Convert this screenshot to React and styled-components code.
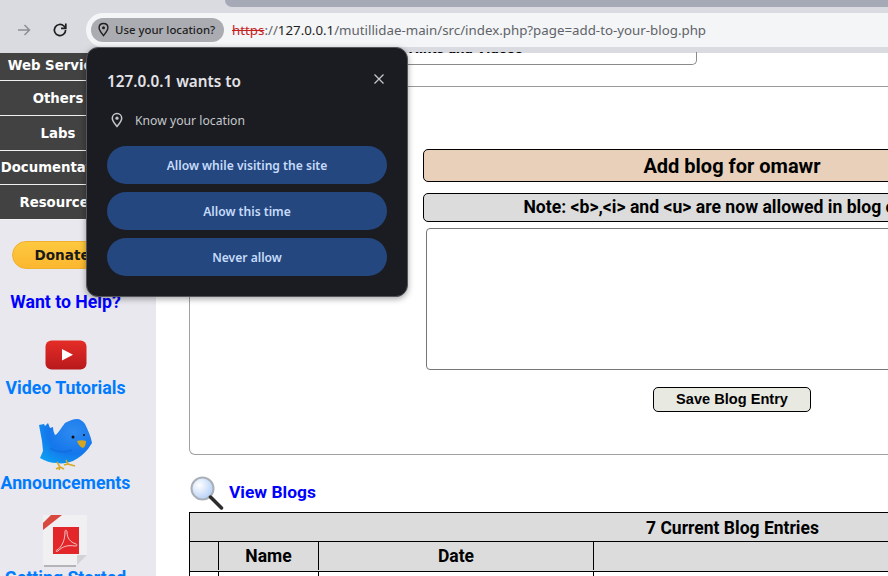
import React from 'react';
import styled, { createGlobalStyle } from 'styled-components';

const GlobalStyle = createGlobalStyle`
html, body {
  margin: 0;
  padding: 0;
  background: #fff;
}
* {
  box-sizing: border-box;
}
`;

const Screen = styled.div`
position: relative;
width: 888px;
height: 576px;
overflow: hidden;
display: flex;
flex-direction: column;
font-family: Roboto, "Liberation Sans", sans-serif;
`;

const TabStrip = styled.div`
height: 13px;
background: #d9dbe1;
padding-left: 225px;
flex: none;
`;

const ActiveTabEdge = styled.div`
height: 7px;
background: #a6aab6;
border-bottom-left-radius: 8px;
`;

const Toolbar = styled.div`
height: 40px;
flex: none;
background: #d9dbe1;
padding-bottom: 6px;
display: flex;
align-items: stretch;
`;

const NavButtons = styled.div`
width: 86px;
flex: none;
display: flex;
align-items: center;
padding-left: 16px;
gap: 20px;
`;

const Omnibox = styled.div`
flex: 1;
background: #f4f5f7;
border-radius: 17px 0 0 17px;
display: flex;
align-items: center;
padding-left: 5px;
`;

const LocationChip = styled.div`
height: 24px;
width: 133px;
flex: none;
border-radius: 12px;
background: #abacb1;
color: #1f1f1f;
display: flex;
align-items: center;
gap: 4px;
padding: 0 0 1px 5px;
font: 500 11.4px "Noto Sans", sans-serif;
white-space: nowrap;
`;

const Url = styled.div`
margin-left: 8px;
font: 13.3px "Noto Sans", sans-serif;
color: #5f6368;
white-space: nowrap;
`;

const Scheme = styled.span`
color: #c5221f;
text-decoration: line-through;
`;

const Host = styled.span`
color: #1f1f1f;
`;

const Page = styled.div`
flex: 1;
min-height: 0;
display: flex;
`;

const Sidebar = styled.div`
width: 156px;
flex: none;
background: #e8e8ee;
display: flex;
flex-direction: column;
`;

const Menu = styled.div`
width: 116px;
display: flex;
flex-direction: column;
`;

const MenuItem = styled.div`
height: ${p => p.$h || 35}px;
background: #424242;
border-bottom: 1px solid #f0f0f0;
color: #fff;
display: flex;
align-items: center;
justify-content: center;
white-space: nowrap;
font: bold 13.3px "DejaVu Sans", sans-serif;
padding-bottom: ${p => p.$lift || 0}px;
`;

const SideLinks = styled.div`
width: 131px;
display: flex;
flex-direction: column;
align-items: center;
padding-top: 21px;
`;

const DonateButton = styled.div`
width: 108px;
height: 28px;
flex: none;
border-radius: 14px;
background: linear-gradient(#fdc93f, #fbb72f);
border: 1px solid #f0b030;
color: #1a1a1a;
font: bold 13.6px "DejaVu Sans", sans-serif;
padding-left: 22px;
display: flex;
align-items: center;
white-space: nowrap;
`;

const SideLink = styled.div`
font: bold 17.7px Roboto, sans-serif;
line-height: 21px;
white-space: nowrap;
color: ${p => p.$dark ? '#0000ff' : '#007bff'};
margin-top: ${p => p.$top || 0}px;
`;

const SideIcon = styled.div`
display: flex;
flex: none;
margin-top: ${p => p.$top || 0}px;
`;

const Content = styled.div`
flex: 1;
min-width: 0;
position: relative;
`;

const TopPanel = styled.div`
height: 34px;
border-bottom: 1px solid #999;
`;

const HintsBox = styled.div`
width: 541px;
height: 13px;
border: 1px solid #8a8a8a;
border-top: 0;
border-radius: 0 0 5px 0;
display: flex;
justify-content: flex-end;
align-items: flex-start;
overflow: hidden;
padding-right: 173px;
font: bold 15px Roboto, sans-serif;
line-height: 14px;
position: relative;
top: -1px;
`;

const HintsText = styled.span`
display: block;
margin-top: -11px;
white-space: nowrap;
`;

const FormPanel = styled.div`
width: 1100px;
margin-left: 33px;
height: 368px;
margin-top: 0;
border: 1px solid #a0a0a0;
border-top: 0;
border-radius: 0 0 0 6px;
padding: 62px 0 0 233px;
`;

const FormColumn = styled.div`
width: 618px;
display: flex;
flex-direction: column;
align-items: center;
`;

const FormTitle = styled.div`
width: 100%;
height: 33px;
background: #e8d0bb;
border: 1px solid #000;
border-radius: 5px;
display: flex;
align-items: center;
justify-content: center;
font: bold 20px Roboto, sans-serif;
color: #000;
`;

const FormNote = styled.div`
width: 100%;
height: 29px;
margin-top: 11px;
padding-bottom: 1px;
background: #dcdcdc;
border: 1px solid #000;
border-radius: 5px;
display: flex;
align-items: center;
justify-content: center;
font: bold 17.6px Roboto, sans-serif;
color: #000;
white-space: nowrap;
`;

const BlogInput = styled.div`
width: 612px;
height: 142px;
margin-top: 6px;
border: 1px solid #767676;
border-radius: 4px;
background: #fff;
`;

const SaveButton = styled.div`
width: 158px;
height: 25px;
margin-top: 17px;
padding-bottom: 1px;
background: #e8e9e1;
border: 1px solid #000;
border-radius: 5px;
display: flex;
align-items: center;
justify-content: center;
font: bold 14.6px "Liberation Sans", sans-serif;
color: #000;
`;

const BlogsHeading = styled.div`
margin: 21px 0 0 33px;
height: 36px;
display: flex;
align-items: center;
gap: 5px;
font: bold 17.4px Roboto, sans-serif;
color: #0000ff;
`;

const BlogsLabel = styled.span`
padding-bottom: 4px;
`;

const BlogTable = styled.div`
margin-left: 33px;
width: 1086px;
border-top: 1px solid #000;
border-left: 1px solid #000;
background: #dcdcdc;
color: #000;
font: bold 17.5px Roboto, sans-serif;
`;

const TableTitle = styled.div`
height: 29px;
padding-top: 1px;
border-bottom: 1px solid #000;
display: flex;
align-items: center;
justify-content: center;
`;

const ColumnRow = styled.div`
display: grid;
grid-template-columns: 29px 100px 275px 1fr;
height: 30px;
padding-bottom: 1px;
border-bottom: 1px solid #000;
`;

const ColumnHead = styled.div`
border-right: 1px solid #000;
display: flex;
align-items: center;
justify-content: center;
`;

const BodyRow = styled.div`
display: grid;
grid-template-columns: 29px 100px 275px 1fr;
height: 20px;
background: #fff;
`;

const Popover = styled.div`
position: absolute;
left: 86px;
top: 47px;
width: 322px;
height: 250px;
background: #1b1c21;
border: 1px solid #55565c;
border-radius: 12px;
box-shadow: 0 2px 6px rgba(0, 0, 0, 0.35);
padding: 0 20px;
display: flex;
flex-direction: column;
font-family: "Noto Sans", sans-serif;
`;

const PopoverHeader = styled.div`
height: 65px;
display: flex;
align-items: center;
justify-content: space-between;
padding: 0 1px 0 0;
color: #e3e3e8;
font-size: 15.3px;
font-weight: 600;
`;

const CloseButton = styled.div`
width: 14px;
height: 14px;
display: flex;
margin-top: -3px;
`;

const PermissionRow = styled.div`
height: 16px;
display: flex;
align-items: center;
gap: 10px;
padding-left: 2px;
margin-top: -1px;
color: #c4c7cc;
font-size: 12.2px;
`;

const Choices = styled.div`
display: flex;
flex-direction: column;
gap: 8px;
margin-top: 18px;
`;

const Choice = styled.div`
height: 38px;
border-radius: 19px;
background: #24477f;
color: #c6dbfa;
display: flex;
align-items: center;
justify-content: center;
font-size: 12.1px;
font-weight: 600;
`;

const PinIcon = ({ color = '#1f1f1f', size = 15 }) => (
  <svg width={size} height={size} viewBox="0 0 16 16" fill="none">
    <path d="M8 1.6c-2.8 0-4.7 2-4.7 4.6 0 3 3 6 4.7 8.2 1.7-2.2 4.7-5.2 4.7-8.2 0-2.6-1.9-4.6-4.7-4.6z" stroke={color} strokeWidth="1.5" />
    <circle cx="8" cy="6.2" r="1.6" fill={color} />
  </svg>
);

const ForwardIcon = () => (
  <svg width="16" height="16" viewBox="0 0 16 16" fill="none" stroke="#8d8f94" strokeWidth="1.5">
    <path d="M2 8h11.5M8.5 3l5 5-5 5" />
  </svg>
);

const ReloadIcon = () => (
  <svg width="16" height="16" viewBox="0 0 16 16" fill="none" stroke="#1f1f1f" strokeWidth="1.7">
    <path d="M13.6 8a5.6 5.6 0 1 1-1.7-4L13.6 6" />
    <path d="M13.8 1.6v4.8H9" />
  </svg>
);

const CloseIcon = () => (
  <svg width="14" height="14" viewBox="0 0 14 14" stroke="#c4c7cc" strokeWidth="1.3">
    <path d="M2.5 2.5l9 9M11.5 2.5l-9 9" />
  </svg>
);

const YoutubeIcon = () => (
  <svg width="42" height="30" viewBox="0 0 42 30">
    <defs>
      <linearGradient id="yt" x1="0" y1="0" x2="0" y2="1">
        <stop offset="0" stopColor="#e52d27" />
        <stop offset="1" stopColor="#b8191c" />
      </linearGradient>
    </defs>
    <rect x="0.5" y="0.5" width="41" height="29" rx="6" fill="url(#yt)" />
    <path d="M17 9l11 5.8-11 5.8z" fill="#fff" />
  </svg>
);

const BirdIcon = () => (
  <svg width="55" height="54" viewBox="0 0 55 54">
    <defs>
      <radialGradient id="bird" cx="0.65" cy="0.3" r="0.8">
        <stop offset="0" stopColor="#2f8bf0" />
        <stop offset="0.6" stopColor="#1577ec" />
        <stop offset="1" stopColor="#0d9cf2" />
      </radialGradient>
    </defs>
    <path d="M1 7l5-1 1 2 3-3 2 5 3-1c0 3 1 6 2 8 3-1 6-7 10-12 4-2 8-4 12-4 3 0 6 2 8 5 3 6 6 13 7 19l-4 6c-4 5-9 9-15 12-6 2-11 3-16 2-6 0-12-2-17-5l3-7-1-10C3 18 2 12 1 7z" fill="url(#bird)" />
    <path d="M12 30c5 4 14 5 22 2" fill="none" stroke="#0f63d6" strokeWidth="2" opacity="0.5" />
    <circle cx="35" cy="19" r="1.5" fill="#111" />
    <circle cx="46" cy="17" r="1" fill="#111" />
    <path d="M39 23c3-1 6-1 9 0 0 3-1 6-3 7-3-1-5-4-6-7z" fill="#d5a520" />
    <path d="M19 44l3 5-4 2M22 49l4 2M22 49l-1 3M28 42l2 4 7 2M30 46l-4 1" fill="none" stroke="#d9a928" strokeWidth="1.5" />
  </svg>
);

const PdfIcon = () => (
  <svg width="48" height="52" viewBox="0 0 48 52">
    <path d="M1 0h44v40L35 50H1z" fill="#f0f0f2" />
    <path d="M35 50V40h10z" fill="#d2d3d5" />
    <path d="M2 51h32" stroke="#a4a4a4" strokeWidth="1.5" />
    <path d="M1 15V8l8-8h11z" fill="#d8483f" />
    <rect x="11" y="12" width="26" height="27" fill="#e2262a" />
    <path d="M15 35c5-3 8-10 8-18 0-3 2-2 2 0 0 6 3 10 9 12 2 1 1 2-1 2-7-1-12 0-17 5-2 1-3 0-1-1z" fill="none" stroke="#f5c5c5" strokeWidth="1" />
  </svg>
);

const MagnifierIcon = () => (
  <svg width="35" height="36" viewBox="0 0 35 36">
    <defs>
      <radialGradient id="lens" cx="0.35" cy="0.35" r="0.8">
        <stop offset="0" stopColor="#ffffff" />
        <stop offset="1" stopColor="#a9c8f5" />
      </radialGradient>
    </defs>
    <circle cx="13.5" cy="12.5" r="11" fill="url(#lens)" stroke="#aab0b8" strokeWidth="2" />
    <path d="M21.5 21l11 11" stroke="#2c2c2c" strokeWidth="3.5" strokeLinecap="round" />
  </svg>
);

const menuItems = [
  { label: 'Web Services', h: 28, lift: 3 },
  { label: 'Others' },
  { label: 'Labs' },
  { label: 'Documentation', h: 34 },
  { label: 'Resources' },
];

export default function App() {
  return (
    <Screen>
      <GlobalStyle />
      <TabStrip>
        <ActiveTabEdge />
      </TabStrip>
      <Toolbar>
        <NavButtons>
          <ForwardIcon />
          <ReloadIcon />
        </NavButtons>
        <Omnibox>
          <LocationChip>
            <PinIcon />
            Use your location?
          </LocationChip>
          <Url>
            <Scheme>https</Scheme>://<Host>127.0.0.1</Host>/mutillidae-main/src/index.php?page=add-to-your-blog.php
          </Url>
        </Omnibox>
      </Toolbar>
      <Page>
        <Sidebar>
          <Menu>
            {menuItems.map(item => (
              <MenuItem key={item.label} $h={item.h} $lift={item.lift}>{item.label}</MenuItem>
            ))}
          </Menu>
          <SideLinks>
            <DonateButton>Donate</DonateButton>
            <SideLink $dark $top={23}>Want to Help?</SideLink>
            <SideIcon $top={27}><YoutubeIcon /></SideIcon>
            <SideLink $top={8}>Video Tutorials</SideLink>
            <SideIcon $top={19}><BirdIcon /></SideIcon>
            <SideLink $top={1}>Announcements</SideLink>
            <SideIcon $top={21}><PdfIcon /></SideIcon>
            <SideLink $top={1}>Getting Started</SideLink>
          </SideLinks>
        </Sidebar>
        <Content>
          <TopPanel>
            <HintsBox><HintsText>Hints and Videos</HintsText></HintsBox>
          </TopPanel>
          <FormPanel>
            <FormColumn>
              <FormTitle>Add blog for omawr</FormTitle>
              <FormNote>{'Note: <b>,<i> and <u> are now allowed in blog entries'}</FormNote>
              <BlogInput />
              <SaveButton>Save Blog Entry</SaveButton>
            </FormColumn>
          </FormPanel>
          <BlogsHeading>
            <MagnifierIcon />
            <BlogsLabel>View Blogs</BlogsLabel>
          </BlogsHeading>
          <BlogTable>
            <TableTitle>7 Current Blog Entries</TableTitle>
            <ColumnRow>
              <ColumnHead />
              <ColumnHead>Name</ColumnHead>
              <ColumnHead>Date</ColumnHead>
              <ColumnHead>Comment</ColumnHead>
            </ColumnRow>
            <BodyRow>
              <ColumnHead />
              <ColumnHead />
              <ColumnHead />
              <ColumnHead />
            </BodyRow>
          </BlogTable>
        </Content>
      </Page>
      <Popover>
        <PopoverHeader>
          127.0.0.1 wants to
          <CloseButton><CloseIcon /></CloseButton>
        </PopoverHeader>
        <PermissionRow>
          <PinIcon color="#c4c7cc" size={16} />
          Know your location
        </PermissionRow>
        <Choices>
          <Choice>Allow while visiting the site</Choice>
          <Choice>Allow this time</Choice>
          <Choice>Never allow</Choice>
        </Choices>
      </Popover>
    </Screen>
  );
}
